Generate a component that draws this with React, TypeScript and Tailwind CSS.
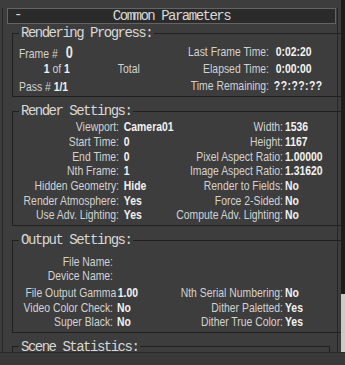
import React from "react";

type Row = [string, string, string, string];

const sans = "font-['Liberation_Sans','Arial',sans-serif] text-[13px] text-[#d2d2d2]";
const mono = "font-['Liberation_Mono','Courier_New',monospace] text-[14px] tracking-[-1.5px] text-[#d8d8d8]";
// the panel text is narrow, so each content block is squeezed horizontally
const squeeze = "w-[395px] origin-left scale-x-[0.8] whitespace-nowrap";
const val = "font-bold text-[#f2f2f2]";

const renderRows: Row[] = [
  ["Viewport:", "Camera01", "Width:", "1536"],
  ["Start Time:", "0", "Height:", "1167"],
  ["End Time:", "0", "Pixel Aspect Ratio:", "1.00000"],
  ["Nth Frame:", "1", "Image Aspect Ratio:", "1.31620"],
  ["Hidden Geometry:", "Hide", "Render to Fields:", "No"],
  ["Render Atmosphere:", "Yes", "Force 2-Sided:", "No"],
  ["Use Adv. Lighting:", "Yes", "Compute Adv. Lighting:", "No"],
];

const outputRows: Row[] = [
  ["File Output Gamma", "1.00", "Nth Serial Numbering:", "No"],
  ["Video Color Check:", "No", "Dither Paletted:", "Yes"],
  ["Super Black:", "No", "Dither True Color:", "Yes"],
];

const GroupBox: React.FC<{ title: string; className?: string; children?: React.ReactNode }> = ({
  title,
  className = "",
  children,
}) => (
  <fieldset className={`ml-[9px] w-[318px] overflow-hidden border border-[#202020] px-0 ${className}`}>
    <legend className={`ml-[6px] px-[2px] leading-[14px] ${mono}`}>{title}</legend>
    {children}
  </fieldset>
);

const App: React.FC = () => {
  return (
    <div className={`flex h-[365px] w-[345px] flex-col overflow-hidden bg-[#3d3d3d] select-none ${sans}`}>
      <div className="flex min-h-0 flex-1">
        {/* rollout */}
        <div className="w-[341px] min-w-0 overflow-hidden">
          <div className="mt-[16px] ml-[2px] h-[400px] w-[336px] border-x border-[#262626]">
            {/* header button */}
            <div className="relative -mt-[8px] ml-[4px] flex h-[16px] w-[329px] items-center justify-center border border-[#646464] bg-[#2b2b2b]">
              <span className={`absolute left-[6px] top-[-1px] leading-[14px] ${mono}`}>-</span>
              <span className={`leading-[14px] ${mono}`}>Common Parameters</span>
            </div>

            {/* Rendering Progress */}
            <GroupBox title="Rendering Progress:" className="mt-[2px] pb-[1px]">
              <div className={`mt-[1px] ${squeeze}`}>
                <div className="grid h-[18px] grid-cols-[131px_72.5px_116.5px_1fr] items-center">
                  <div className="pl-[7.5px]">
                    Frame #<span className="ml-[10px] text-[16px] font-bold text-[#e6e6e6]">0</span>
                  </div>
                  <div />
                  <div className="-mt-[3px] flex justify-end">Last Frame Time:</div>
                  <div className={`-mt-[3px] pl-[8.5px] ${val}`}>0:02:20</div>
                </div>
                <div className="grid h-[18px] grid-cols-[131px_72.5px_116.5px_1fr] items-center">
                  <div className="pl-[38.5px]">
                    <b className="text-[#f2f2f2]">1</b> of <b className="text-[#f2f2f2]">1</b>
                  </div>
                  <div>Total</div>
                  <div className="flex justify-end">Elapsed Time:</div>
                  <div className={`pl-[8.5px] ${val}`}>0:00:00</div>
                </div>
                <div className="grid h-[18px] grid-cols-[131px_72.5px_116.5px_1fr] items-center">
                  <div className="pl-[7.5px]">
                    Pass # <b className="text-[#f2f2f2]">1/1</b>
                  </div>
                  <div />
                  <div className="-mt-[2px] flex justify-end">Time Remaining:</div>
                  <div className={`-mt-[2px] pl-[6px] tracking-[0.6px] ${val}`}>??:??:??</div>
                </div>
              </div>
            </GroupBox>

            {/* Render Settings */}
            <GroupBox title="Render Settings:" className="mt-[7px] pb-[2.5px]">
              <div className={`mt-[2px] ${squeeze}`}>
                {renderRows.map(([l, v, rl, rv]) => (
                  <div key={l} className="grid h-[14.67px] grid-cols-[132.5px_75px_130px_1fr] items-center leading-[14px]">
                    <div className="flex justify-end">{l}</div>
                    <div className={`pl-[6px] ${val}`}>{v}</div>
                    <div className="flex justify-end">{rl}</div>
                    <div className={`pl-[2.5px] ${val}`}>{rv}</div>
                  </div>
                ))}
              </div>
            </GroupBox>

            {/* Output Settings */}
            <GroupBox title="Output Settings:" className="mt-[7px] pb-[2.5px]">
              <div className={`mt-[8px] ${squeeze}`}>
                {["File Name:", "Device Name:"].map((l) => (
                  <div key={l} className="grid h-[14px] grid-cols-[125px_1fr] items-center leading-[14px]">
                    <div className="flex justify-end">{l}</div>
                    <div />
                  </div>
                ))}
                <div className="mt-[3px]">
                  {outputRows.map(([l, v, rl, rv], i) => (
                    <div key={l} className="grid h-[14.5px] grid-cols-[125px_82.5px_130px_1fr] items-center leading-[14px]">
                      <div className="flex justify-end">
                        <span className={i === 0 ? "-mr-[4px]" : ""}>{l}</span>
                      </div>
                      <div className={`${i === 0 ? "pl-[6px]" : "pl-[5px]"} ${val}`}>{v}</div>
                      <div className="flex justify-end">{rl}</div>
                      <div className={`pl-[2.5px] ${val}`}>{rv}</div>
                    </div>
                  ))}
                </div>
              </div>
            </GroupBox>

            {/* Scene Statistics */}
            <GroupBox title="Scene Statistics:" className="mt-[6.5px] h-[60px]" />
          </div>
        </div>

        {/* scrollbar */}
        <div className="ml-auto flex w-[4px] flex-col">
          <div className="flex-1 bg-[#1c1c1c]" />
          <div className="h-[58px] bg-[#c9c9c9]" />
        </div>
      </div>

      {/* bottom edge */}
      <div className="h-[13px] shrink-0 border-t border-[#2a2a2a] bg-[#393939]" />
    </div>
  );
};

export default App;
